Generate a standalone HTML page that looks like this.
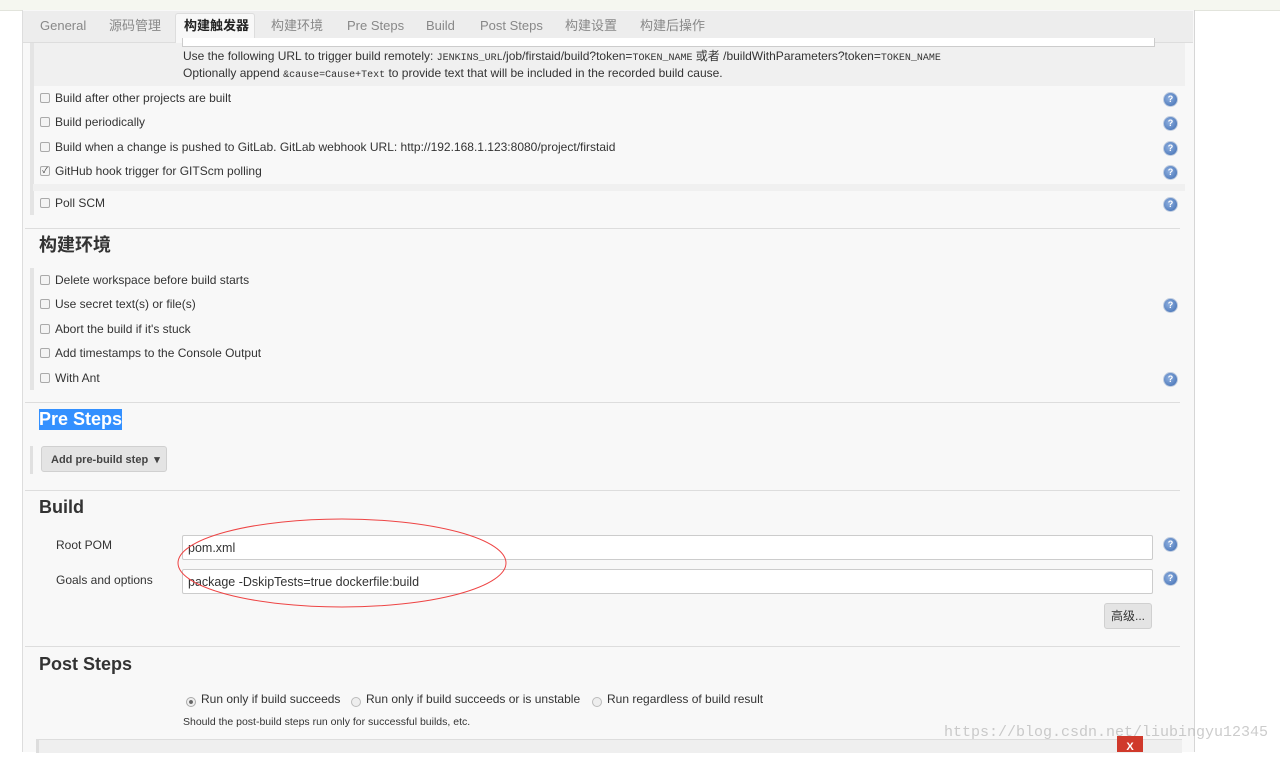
<!DOCTYPE html>
<html><head><meta charset="utf-8"><style>
body{margin:0;width:1280px;height:752px;background:#fff;position:relative;overflow:hidden;font-family:"Liberation Sans","Noto Sans CJK SC",sans-serif;font-size:12px;color:#333}
.a{position:absolute}
.cb{position:absolute;width:8px;height:8px;border:1px solid #aaa;border-radius:2px;background:#f4f4f4}
.t{position:absolute;white-space:nowrap;line-height:15px}
.help{position:absolute;width:13px;height:13px;border-radius:50%;background:radial-gradient(circle at 40% 40%,#8fb0e0,#3d6bb0);border:1px solid #c0cde0;color:#fff;font-size:9px;font-weight:bold;text-align:center;line-height:13px}
.hr{position:absolute;left:25px;width:1155px;height:1px;background:#ddd}
.h{position:absolute;font-weight:bold;font-size:18px;color:#333;line-height:21px}
.inp{position:absolute;left:182px;width:971px;height:25px;background:#fff;border:1px solid #ccc;border-radius:2px;font-size:12.5px;line-height:25px;padding-left:5px;box-sizing:border-box}
.tab{position:absolute;top:18px;color:#888;font-size:13px;line-height:16px;height:16px}
</style></head><body>
<div class="a" style="left:0;top:0;width:1280px;height:10px;background:#f5f7f0;border-bottom:1px solid #e2e4dc"></div>
<div class="a" style="left:22px;top:10px;width:1171px;height:742px;background:#f8f8f8;border-left:1px solid #ddd;border-right:1px solid #d6d6d6"></div>
<div class="a" style="left:23px;top:11px;width:1170px;height:31px;background:#ededed;border-bottom:1px solid #ddd"></div>
<div class="a" style="left:175px;top:13px;width:78px;height:30px;background:#f8f8f8;border:1px solid #ddd;border-bottom:none;border-radius:3px 3px 0 0"></div>
<span class="tab" style="left:40px">General</span>
<span class="tab" style="left:109px">源码管理</span>
<span class="tab" style="left:184px;color:#222;font-weight:bold">构建触发器</span>
<span class="tab" style="left:271px">构建环境</span>
<span class="tab" style="left:347px">Pre Steps</span>
<span class="tab" style="left:426px">Build</span>
<span class="tab" style="left:480px">Post Steps</span>
<span class="tab" style="left:565px">构建设置</span>
<span class="tab" style="left:640px">构建后操作</span>
<div class="a" style="left:33px;top:43px;width:1152px;height:43px;background:#f0f0f0"></div>
<div class="a" style="left:182px;top:38px;width:971px;height:8px;background:#fff;border:1px solid #ccc;border-top:none"></div>
<div class="a" style="left:30px;top:43px;width:4px;height:172px;background:#e4e4e4"></div>
<div class="t" style="left:183px;top:49px;font-size:12px">Use the following URL to trigger build remotely: <span style="font-family:'Liberation Mono',monospace;font-size:10px">JENKINS_URL</span>/job/firstaid/build?token=<span style="font-family:'Liberation Mono',monospace;font-size:10px">TOKEN_NAME</span> 或者 /buildWithParameters?token=<span style="font-family:'Liberation Mono',monospace;font-size:10px">TOKEN_NAME</span></div>
<div class="t" style="left:183px;top:66px;font-size:12px">Optionally append <span style="font-family:'Liberation Mono',monospace;font-size:10px">&amp;cause=Cause+Text</span> to provide text that will be included in the recorded build cause.</div>
<div class="cb" style="left:40px;top:93px"></div><div class="t" style="left:55px;top:91px">Build after other projects are built</div><div class="help" style="left:1163px;top:92px">?</div>
<div class="cb" style="left:40px;top:117px"></div><div class="t" style="left:55px;top:115px">Build periodically</div><div class="help" style="left:1163px;top:116px">?</div>
<div class="cb" style="left:40px;top:142px"></div><div class="t" style="left:55px;top:140px">Build when a change is pushed to GitLab. GitLab webhook URL: http://192.168.1.123:8080/project/firstaid</div><div class="help" style="left:1163px;top:141px">?</div>
<div class="cb" style="left:40px;top:166px;font-size:8px;line-height:8px;text-align:center">✓</div><div class="t" style="left:55px;top:164px">GitHub hook trigger for GITScm polling</div><div class="help" style="left:1163px;top:165px">?</div>
<div class="a" style="left:33px;top:184px;width:1152px;height:7px;background:#f0f0f0"></div>
<div class="cb" style="left:40px;top:198px"></div><div class="t" style="left:55px;top:196px">Poll SCM</div><div class="help" style="left:1163px;top:197px">?</div>
<div class="hr" style="top:228px"></div>
<div class="h" style="left:39px;top:235px">构建环境</div>
<div class="a" style="left:30px;top:268px;width:4px;height:122px;background:#e4e4e4"></div>
<div class="cb" style="left:40px;top:275px"></div><div class="t" style="left:55px;top:273px">Delete workspace before build starts</div>
<div class="cb" style="left:40px;top:299px"></div><div class="t" style="left:55px;top:297px">Use secret text(s) or file(s)</div><div class="help" style="left:1163px;top:298px">?</div>
<div class="cb" style="left:40px;top:324px"></div><div class="t" style="left:55px;top:322px">Abort the build if it's stuck</div>
<div class="cb" style="left:40px;top:348px"></div><div class="t" style="left:55px;top:346px">Add timestamps to the Console Output</div>
<div class="cb" style="left:40px;top:373px"></div><div class="t" style="left:55px;top:371px">With Ant</div><div class="help" style="left:1163px;top:372px">?</div>
<div class="hr" style="top:402px"></div>
<div class="h" style="left:39px;top:409px;background:#3390ff;color:#fff">Pre Steps</div>
<div class="a" style="left:30px;top:446px;width:3px;height:28px;background:#e0e0e0"></div>
<div class="a" style="left:41px;top:446px;width:126px;height:26px;background:#e4e4e4;border:1px solid #d0d0d0;border-radius:3px;font-size:11px;font-weight:bold;color:#444;line-height:26px;box-sizing:border-box;padding-left:9px">Add pre-build step &nbsp;▾</div>
<div class="hr" style="top:490px"></div>
<div class="h" style="left:39px;top:497px">Build</div>
<div class="t" style="left:56px;top:538px">Root POM</div>
<div class="inp" style="top:535px">pom.xml</div><div class="help" style="left:1163px;top:537px">?</div>
<div class="t" style="left:56px;top:573px">Goals and options</div>
<div class="inp" style="top:569px">package -DskipTests=true dockerfile:build</div><div class="help" style="left:1163px;top:571px">?</div>
<svg class="a" style="left:175px;top:515px" width="340" height="100"><ellipse cx="167" cy="48" rx="164" ry="44" fill="none" stroke="#e44" stroke-width="1"/></svg>
<div class="a" style="left:1104px;top:603px;width:48px;height:26px;background:#e4e4e4;border:1px solid #d0d0d0;border-radius:3px;font-size:12px;line-height:24px;text-align:center;box-sizing:border-box">高级...</div>
<div class="hr" style="top:646px"></div>
<div class="h" style="left:39px;top:654px">Post Steps</div>
<div class="a" style="left:186px;top:697px;width:8px;height:8px;border-radius:50%;border:1px solid #aaa;background:radial-gradient(#666 30%,#eee 40%)"></div>
<div class="t" style="left:201px;top:692px">Run only if build succeeds</div>
<div class="a" style="left:351px;top:697px;width:8px;height:8px;border-radius:50%;border:1px solid #bbb;background:#eee"></div>
<div class="t" style="left:366px;top:692px">Run only if build succeeds or is unstable</div>
<div class="a" style="left:592px;top:697px;width:8px;height:8px;border-radius:50%;border:1px solid #bbb;background:#eee"></div>
<div class="t" style="left:607px;top:692px">Run regardless of build result</div>
<div class="t" style="left:183px;top:715px;font-size:10.5px">Should the post-build steps run only for successful builds, etc.</div>
<div class="a" style="left:36px;top:739px;width:1143px;height:13px;background:#efefef;border-top:1px solid #ddd;border-left:3px solid #ddd"></div>
<div class="a" style="left:1117px;top:736px;width:26px;height:16px;background:#d0392b;color:#fff;font-weight:bold;font-size:11px;text-align:center;line-height:22px">X</div>
<div class="t" style="left:944px;top:724px;font-family:'Liberation Mono',monospace;font-size:15px;line-height:18px;color:rgba(170,170,170,0.6)">https://blog.csdn.net/liubingyu12345</div>
</body></html>
